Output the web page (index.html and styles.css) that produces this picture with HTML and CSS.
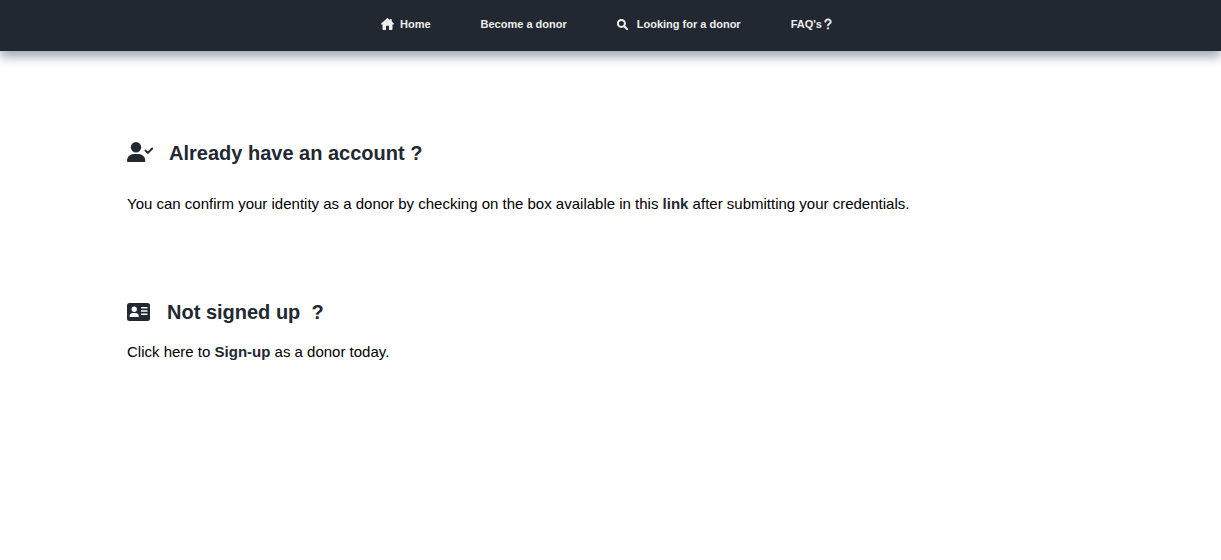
FILE: index.html
```html
<!DOCTYPE html>
<html lang="en">
<head>
<meta charset="utf-8">
<meta name="viewport" content="width=device-width, initial-scale=1">
<title>Become a donor</title>
<link rel="stylesheet" href="styles.css">
</head>
<body>
<nav class="navbar">
  <a class="nav-link" href="#"><svg class="icon-home" viewBox="0 0 13 12" aria-hidden="true"><path d="M5.8.4a1 1 0 0 1 1.4 0L9 2V1.2h1.8v2.4l2 1.9c.4.5.1 1.1-.5 1.1h-.8v4.4a1 1 0 0 1-1 1H8V8.4a.6.6 0 0 0-.6-.6H5.6a.6.6 0 0 0-.6.6V12H2.500a1 1 0 0 1-1-1V6.600H.7C.1 6.600-.2 6 .2 5.500Z"/></svg>Home</a>
  <a class="nav-link" href="#">Become a donor</a>
  <a class="nav-link" href="#"><svg class="icon-search" viewBox="0 0 11 11" aria-hidden="true"><circle cx="4.400" cy="4.400" r="3.500"/><path d="M7 7l3.200 3.200"/></svg>Looking for a donor</a>
  <a class="nav-link" href="#">FAQ's<svg class="icon-question" viewBox="0 0 320 512" aria-hidden="true"><path d="M80 160c0-35.3 28.7-64 64-64h32c35.3 0 64 28.7 64 64v3.6c0 21.8-11.1 42.1-29.4 53.8l-42.2 27.1c-25.2 16.2-40.4 44.1-40.4 74V320c0 17.7 14.3 32 32 32s32-14.3 32-32v-1.4c0-8.2 4.2-15.8 11-20.2l42.2-27.1c36.6-23.6 58.8-64.1 58.8-107.7V160c0-70.7-57.3-128-128-128H144C73.3 32 16 89.3 16 160c0 17.7 14.3 32 32 32s32-14.3 32-32zm80 320a40 40 0 1 0 0-80 40 40 0 1 0 0 80z"/></svg></a>
</nav>
<main class="content">
  <section class="block block-account">
    <h1 class="title"><svg class="icon-user" viewBox="0 0 26 22" aria-hidden="true"><circle cx="9" cy="5.300" r="5.200"/><path d="M0 18.800C0 15 3 12 6.800 12h4.700c3.800 0 6.800 3 6.800 6.800 0 .8-.5 1.200-1.200 1.200H1.200C.5 20 0 19.600 0 18.800Z"/><path class="check" d="M18.500 8.600l2.300 2.300 4.400-4.400"/></svg>Already have an account ?</h1>
    <p class="text">You can confirm your identity as a donor by checking on the box available in this <a class="link" href="#">link</a> after submitting your credentials.</p>
  </section>
  <section class="block block-signup">
    <h2 class="title"><svg class="icon-card" viewBox="0 0 23 20" aria-hidden="true"><path fill-rule="evenodd" d="M2.500 1h18A2.500 2.500 0 0 1 23 3.500v13a2.500 2.500 0 0 1-2.500 2.500h-18A2.500 2.500 0 0 1 0 16.500v-13A2.500 2.500 0 0 1 2.500 1ZM7.200 4.600a2.700 2.700 0 1 0 0 5.400 2.700 2.700 0 1 0 0-5.400ZM5.800 11C3.900 11 2.500 12.400 2.500 14.300c0 .4.300.7.700.7h8c.4 0 .7-.3.700-.7 0-1.900-1.400-3.300-3.300-3.300ZM14 5v1.500h6.500V5ZM14 8.300v1.500h6.500V8.300ZM14 11.500V13h6.500v-1.500Z"/></svg>Not signed up&nbsp; ?</h2>
    <p class="text">Click here to <a class="link" href="#">Sign-up</a> as a donor today.</p>
  </section>
</main>
</body>
</html>
```
FILE: styles.css
```css
* {
  box-sizing: border-box;
}

body {
  margin: 0;
  background: #fff;
  color: #000;
  font-family: "Liberation Sans", Arial, sans-serif;
}

svg {
  display: block;
  flex: none;
  fill: currentColor;
}

.navbar {
  display: flex;
  justify-content: center;
  gap: 50px;
  padding: 16px 8px 19px 0;
  background: #222831;
  box-shadow: 0 6px 10px #a3a9b8;
}

.nav-link {
  display: flex;
  align-items: center;
  color: #eee;
  font-size: 11px;
  font-weight: bold;
  line-height: 16px;
  text-decoration: none;
}

.icon-home {
  width: 13px;
  height: 12px;
  margin-right: 6px;
}

.icon-search {
  width: 11px;
  height: 11px;
  margin-right: 9px;
  fill: none;
  stroke: currentColor;
  stroke-width: 2;
  stroke-linecap: round;
}

.icon-question {
  width: 8px;
  height: 12px;
  margin-left: 2px;
  stroke: currentColor;
  stroke-width: 20;
}

.content {
  padding: 88px 127px;
}

.title {
  display: flex;
  align-items: center;
  margin: 0;
  color: #222831;
  font-size: 20px;
  line-height: 28px;
}

.icon-user {
  width: 26px;
  height: 22px;
  margin-right: 16px;
}

.check {
  fill: none;
  stroke: currentColor;
  stroke-width: 2;
  stroke-linecap: round;
  stroke-linejoin: round;
}

.icon-card {
  width: 23px;
  height: 20px;
  margin-right: 17px;
}

.text {
  margin: 0;
  font-size: 15px;
  line-height: 20px;
}

.block {
  display: flex;
  flex-direction: column;
}

.block-account {
  gap: 27px;
}

.block-signup {
  gap: 16px;
  margin-top: 84px;
}

.link {
  color: #222831;
  font-weight: bold;
  text-decoration: none;
}
```
